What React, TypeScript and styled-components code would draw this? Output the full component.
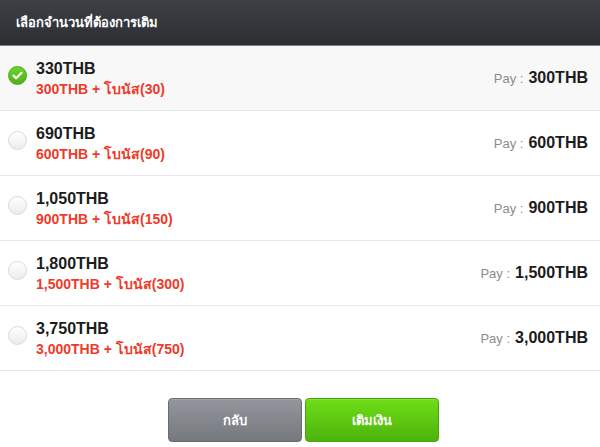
import React, { useState } from "react";
import styled, { createGlobalStyle } from "styled-components";

const Global = createGlobalStyle`
  html, body { margin: 0; padding: 0; background: #ffffff; }
  body { font-family: "Liberation Sans", "Noto Sans", Tahoma, sans-serif; }
`;

const Page = styled.div`
  width: 600px;
  height: 447px;
  background: #ffffff;
  display: flex;
  flex-direction: column;
`;

const Header = styled.div`
  height: 45px;
  background: linear-gradient(#3d4046, #2c2e32);
  border-bottom: 1px solid #7c7e82;
  display: flex;
  align-items: center;
  padding-left: 16px;
  color: #ffffff;
  font-weight: bold;
  font-size: 13px;
`;

const List = styled.div`
  display: flex;
  flex-direction: column;
`;

const Row = styled.div<{ $selected: boolean }>`
  height: 64px;
  border-bottom: 1px solid #e6e6e6;
  background: ${(p) => (p.$selected ? "#f8f8f8" : "#ffffff")};
  display: flex;
  align-items: center;
  padding: 0 12px 0 8px;
  cursor: pointer;
`;

const Radio = styled.div<{ $checked: boolean }>`
  width: 19px;
  height: 19px;
  border-radius: 50%;
  box-sizing: border-box;
  margin-top: -6px;
  flex: none;
  display: flex;
  align-items: center;
  justify-content: center;
  background: ${(p) =>
    p.$checked
      ? "linear-gradient(#6bd22a, #4fb319)"
      : "linear-gradient(#ffffff, #ececec)"};
  border: 1px solid ${(p) => (p.$checked ? "#4aa716" : "#dadada")};
`;

const Info = styled.div`
  margin-left: 9px;
  display: flex;
  flex-direction: column;
  gap: 1px;
  flex: 1;
`;

const Title = styled.div`
  font-size: 16px;
  line-height: 20px;
  font-weight: bold;
  color: #1c1c1c;
`;

const Sub = styled.div`
  font-size: 14px;
  line-height: 18px;
  font-weight: bold;
  color: #ee3b2a;
`;

const Pay = styled.div`
  display: flex;
  align-items: baseline;
  gap: 5px;
  line-height: 20px;
`;

const PayLabel = styled.span`
  font-size: 13px;
  color: #8c8c8c;
`;

const PayValue = styled.span`
  font-size: 16px;
  font-weight: bold;
  color: #1c1c1c;
`;

const Footer = styled.div`
  display: flex;
  justify-content: center;
  gap: 3px;
  margin-top: 27px;
  padding-left: 6px;
`;

const Button = styled.button<{ $variant: "grey" | "green" }>`
  width: 134px;
  height: 44px;
  border-radius: 4px;
  font-family: inherit;
  font-size: 13px;
  font-weight: bold;
  color: #ffffff;
  cursor: pointer;
  border: 1px solid ${(p) => (p.$variant === "grey" ? "#6a6c70" : "#46a30c")};
  background: ${(p) =>
    p.$variant === "grey"
      ? "linear-gradient(#93969c, #75787d)"
      : "linear-gradient(#6fdd17, #4db30d)"};
  box-shadow: inset 0 1px 0 rgba(255, 255, 255, 0.15);
`;

const items = [
  { total: "330THB", sub: "300THB + โบนัส(30)", pay: "300THB" },
  { total: "690THB", sub: "600THB + โบนัส(90)", pay: "600THB" },
  { total: "1,050THB", sub: "900THB + โบนัส(150)", pay: "900THB" },
  { total: "1,800THB", sub: "1,500THB + โบนัส(300)", pay: "1,500THB" },
  { total: "3,750THB", sub: "3,000THB + โบนัส(750)", pay: "3,000THB" },
];

export default function App() {
  const [sel, setSel] = useState(0);
  return (
    <Page>
      <Global />
      <Header>เลือกจำนวนที่ต้องการเติม</Header>
      <List>
        {items.map((it, i) => (
          <Row key={i} $selected={sel === i} onClick={() => setSel(i)}>
            <Radio $checked={sel === i}>
              {sel === i && (
                <svg width="11" height="9" viewBox="0 0 11 9">
                  <path
                    d="M1.5 4.6 L4.2 7.2 L9.5 1.8"
                    fill="none"
                    stroke="#ffffff"
                    strokeWidth="2.2"
                    strokeLinecap="round"
                    strokeLinejoin="round"
                  />
                </svg>
              )}
            </Radio>
            <Info>
              <Title>{it.total}</Title>
              <Sub>{it.sub}</Sub>
            </Info>
            <Pay>
              <PayLabel>Pay :</PayLabel>
              <PayValue>{it.pay}</PayValue>
            </Pay>
          </Row>
        ))}
      </List>
      <Footer>
        <Button $variant="grey">กลับ</Button>
        <Button $variant="green">เติมเงิน</Button>
      </Footer>
    </Page>
  );
}
